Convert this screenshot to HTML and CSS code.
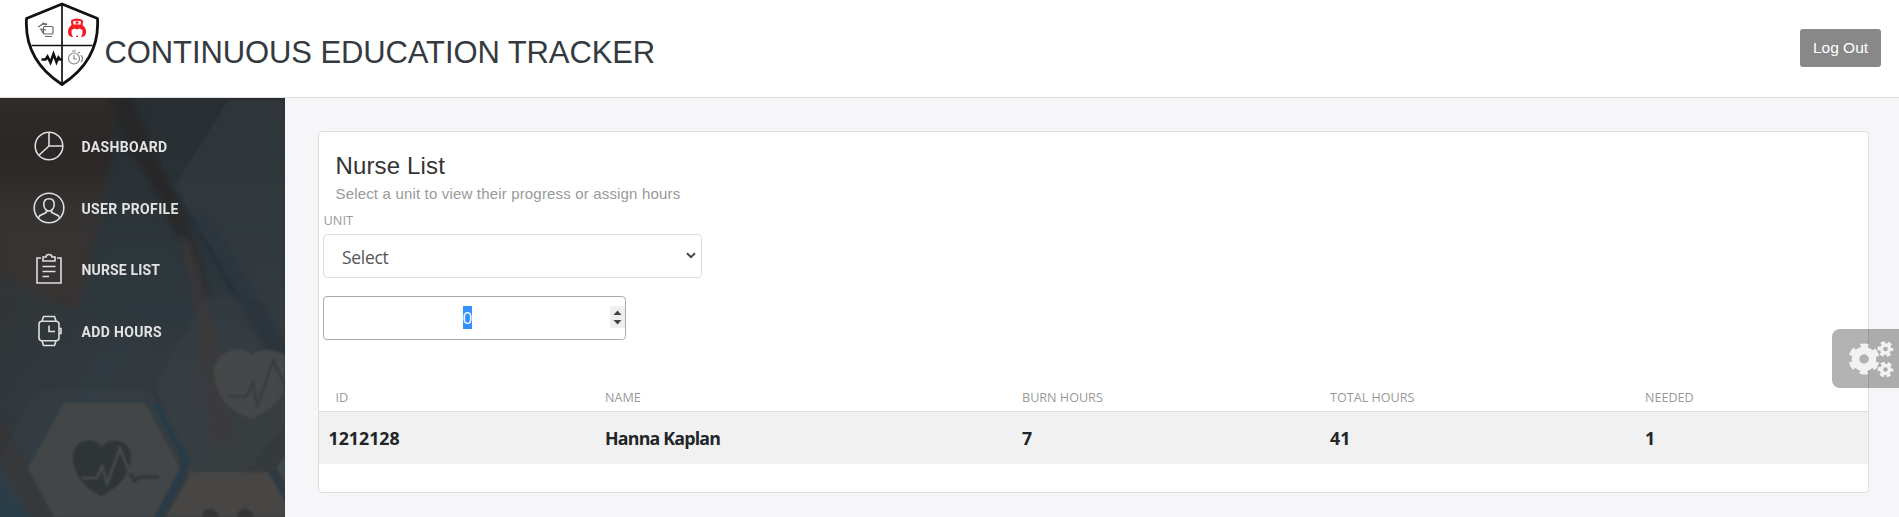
FILE: index.html
```html
<!DOCTYPE html>
<html lang="en">
<head>
<meta charset="utf-8">
<title>Continuous Education Tracker</title>
<link rel="stylesheet" href="styles.css">
</head>
<body>
<header class="header">
  <div class="brand">
    <svg class="shield" viewBox="0 0 76 88" fill="none">
      <path d="M38 4 L73.500 18.500 Q76 60 38 84.500 Q0 60 2.500 18.500 Z" stroke="#111" stroke-width="2.800" stroke-linejoin="round"/>
      <path d="M38 4V84M7.500 45.500H68.500" stroke="#111" stroke-width="1.700"/>
      <g stroke="#666" stroke-width="1.200">
        <rect x="19.500" y="26.500" width="9.500" height="7.500" rx="1"/>
        <path d="M14 27l5-3 4 1M16 29l6 1M21 36.500h7M18 23l5 1M17 29l2 4"/>
      </g>
      <path d="M47 22q-1-3 6-3.500 7 .500 6 3.500l-.500 3q4 3 3.500 8-.500 4-5 4 2-3 1.500-7l-3-1.500-2.500 1-2.500-1-3 1.500q-.500 4 1.500 7-4.500 0-5-4-.500-5 3.500-8z" fill="#f31b24"/>
      <path d="M49 21.500q4-1.500 8 0l-.500 3h-7z" fill="#fff"/>
      <path d="M53 21v3.500M51.300 22.700h3.400M52 36.300h2" stroke="#f31b24" stroke-width="1.200"/>
      <path d="M17.500 59.500h4l2-3 3 6 3-8.500 3 8 2-4.500 1.500 2h2" stroke="#111" stroke-width="2.600"/>
      <g stroke="#888" stroke-width="1.200">
        <circle cx="50" cy="58.500" r="5.500"/><path d="M50 55v4h3M48 51h4M54 53l2-1M57 55q3 4 0 7"/>
      </g>
    </svg>
    <h1 class="brand-name">CONTINUOUS EDUCATION TRACKER</h1>
  </div>
  <button class="logout">Log Out</button>
</header>
<div class="layout">
  <aside class="sidebar">
    <svg class="backdrop" viewBox="0 0 285 419" preserveAspectRatio="none">
      <defs>
        <linearGradient id="base" x1="0" y1="0" x2="1" y2="1">
          <stop offset="0" stop-color="#302f2e"/><stop offset=".5" stop-color="#313a40"/><stop offset="1" stop-color="#363a3c"/>
        </linearGradient>
        <linearGradient id="skin" x1="0" y1="0" x2="0" y2="1">
          <stop offset="0" stop-color="#302d2b"/><stop offset=".3" stop-color="#2a2726"/><stop offset=".55" stop-color="#353130"/><stop offset="1" stop-color="#383331"/>
        </linearGradient>
        <linearGradient id="shade" x1="0" y1="0" x2="0" y2="1">
          <stop offset="0" stop-color="#272c2f"/><stop offset=".7" stop-color="#2c353a"/><stop offset="1" stop-color="#2f383e"/>
        </linearGradient>
        <filter id="soft" color-interpolation-filters="sRGB"><feGaussianBlur stdDeviation="3"/></filter>
        <filter id="wide" color-interpolation-filters="sRGB"><feGaussianBlur stdDeviation="9"/></filter>
        <filter id="edge" color-interpolation-filters="sRGB"><feGaussianBlur stdDeviation=".8"/></filter>
      </defs>
      <rect width="285" height="419" fill="url(#base)"/>
      <path d="M95-30H310V240H180L75 225Z" fill="url(#shade)" filter="url(#wide)"/>
      <g filter="url(#soft)">
        <path d="M-10-10H108Q118 50 105 90Q92 170 76 210Q50 204-10 170Z" fill="url(#skin)"/>
        <path d="M108-5L130-5Q155 60 184 115Q206 170 212 220L200 200Q185 150 165 115Q150 75 125 50Z" fill="#272728"/>
        <path d="M190 120L255 235L290 300V250L205 110Z" fill="#262f37"/>
        <path d="M180 140Q194 190 200 240L208 300L212 345H235L220 265Q208 190 188 140Z" fill="#393637"/>
        <path d="M0 320L40 390L55 425H35L-5 350Z" fill="#353435"/>
        <path d="M0 382L35 425H-5Z" fill="#253b48"/>
      </g>
      <g filter="url(#edge)">
        <path d="M228 2H285V200H240L175 88Z" fill="#3a4245" opacity=".4"/>
        <path d="M0 101H175L202 150V200H0Z" fill="#3d4345" opacity=".1"/>
        <path d="M205 199H285V330L235 385H190L155 286Z" fill="#45494a" opacity=".25"/>
        <path d="M35 292H150L185 350L150 419H0V360Z" fill="#424a4e" opacity=".2"/>
        <path d="M156 306L187 364L158 419" fill="none" stroke="#273c49" stroke-width="6"/>
        <path d="M271 374L287 402" fill="none" stroke="#2b3b45" stroke-width="5"/>
        <path d="M64 305H145L180 370L154 419H54L28 370Z" fill="#424647"/>
        <path d="M191 374H268L285 403V419H166Z" fill="#474645"/>
        <path d="M277 369L285 357V385Z" fill="#41494b"/>
        <path d="M252 258Q247 250 234 252Q213 256 214 278Q217 309 252 321Q283 306 285 288V257Q263 246 252 258Z" fill="#454849"/>
        <path d="M228 298L246 299L253 285L257 309L273 262L285 288" fill="none" stroke="#373b3e" stroke-width="2.500"/>
        <path d="M102 349Q96 341 84 343Q72 347 73 362Q76 386 101 398Q127 386 131 362Q132 346 118 343Q108 341 102 349Z" fill="#2f3436"/>
        <path d="M82 380H97L102 368L107 386L120 350L133 384" fill="none" stroke="#484c4d" stroke-width="2.400"/>
        <path d="M130 375L134.500 383L139 379H159" fill="none" stroke="#2f3436" stroke-width="3"/>
        <path d="M202 419q1-8 8-8t9 8zM237 419q1-8 8-8t9 8z" fill="#343434"/>
      </g>
    </svg>
    <nav class="menu">
      <a class="menu-item"><svg class="menu-icon" viewBox="0 0 32 32"><circle cx="16" cy="16" r="13.800"/><path d="M16 2.200V16H29.800M16 16L6.200 25"/></svg><span>DASHBOARD</span></a>
      <a class="menu-item"><svg class="menu-icon" viewBox="0 0 32 32"><circle cx="16" cy="16" r="14.800"/><path d="M16 6.700C12.500 6.700 10.800 9 10.800 12.200C10.800 16 13 19 16 19C19 19 21.200 16 21.200 12.200C21.200 9 19.500 6.700 16 6.700ZM13.300 18.500V20.500L6.700 23.700L5.500 26M18.700 18.500V20.500L25.300 23.700L26.500 26"/></svg><span>USER PROFILE</span></a>
      <a class="menu-item tight"><svg class="menu-icon" viewBox="0 0 32 32"><path d="M8 5H4V30H28V5H24M10 4V8H22V4H19Q19 1.500 16 1.500Q13 1.500 13 4ZM9.500 13.500H22.500M9.500 18.500H22.500M9.500 23.500H16"/></svg><span>NURSE LIST</span></a>
      <a class="menu-item"><svg class="menu-icon" viewBox="0 0 32 32"><rect x="6" y="6.300" width="20" height="19.400" rx="3"/><path d="M9 6L10.500 1.500H21.500L23 6M9 26L10.500 30.500H21.500L23 26M16 10.500V16.500H22M26 13.500H28V18.500H26"/></svg><span>ADD HOURS</span></a>
    </nav>
  </aside>
  <main class="content">
    <section class="card">
      <h2 class="card-title">Nurse List</h2>
      <p class="card-note">Select a unit to view their progress or assign hours</p>
      <div class="unit-label">UNIT</div>
      <div class="select"><span>Select</span><svg class="chevron" viewBox="0 0 10 7"><path d="M1 1.200L5 5.200L9 1.200"/></svg></div>
      <div class="number">
        <span class="number-value"><span class="selected">0</span></span>
        <span class="spinner"><svg viewBox="0 0 15 22"><path d="M3.500 9L7.500 4.500L11.500 9ZM3.500 14L7.500 18.500L11.500 14Z"/></svg></span>
      </div>
      <div class="table">
        <div class="row head"><span class="first">ID</span><span>NAME</span><span>BURN HOURS</span><span>TOTAL HOURS</span><span>NEEDED</span></div>
        <div class="row data"><span class="first">1212128</span><span class="name">Hanna Kaplan</span><span>7</span><span>41</span><span>1</span></div>
      </div>
    </section>
  </main>
</div>
<div class="settings">
  <svg viewBox="0 0 46 38">
    <g fill="none" stroke="#f2f2f2">
      <circle cx="16" cy="19" r="8.500" stroke-width="7.500"/>
      <circle cx="16" cy="19" r="13.200" stroke-width="4.600" stroke-dasharray="7.600 6.223" stroke-dashoffset="-3.110"/>
      <circle cx="37.500" cy="9" r="4" stroke-width="3.400"/>
      <circle cx="37.500" cy="9" r="6.400" stroke-width="3" stroke-dasharray="3.900 2.802" stroke-dashoffset="1.950"/>
      <circle cx="37.500" cy="29.500" r="4" stroke-width="3.400"/>
      <circle cx="37.500" cy="29.500" r="6.400" stroke-width="3" stroke-dasharray="3.900 2.802" stroke-dashoffset="1.950"/>
    </g>
  </svg>
</div>
</body>
</html>
```

FILE: styles.css
```css
* { box-sizing: border-box; }
html, body { margin: 0; height: 100%; overflow: hidden; }
body { display: flex; flex-direction: column; background: #f6f6f8; font-family: "Open Sans", "Noto Sans", sans-serif; }
.header { flex: none; height: 98px; padding: 0 18px 0 24px; display: flex; justify-content: space-between; background: #fff; border-bottom: 1px solid #ddd; }
.brand { display: flex; }
.shield { width: 76px; height: 88px; }
.brand-name { margin: 36px 0 0 4.500px; font: 400 31px/34px "Liberation Sans", Arial, sans-serif; letter-spacing: -.1px; color: #343a40; white-space: nowrap; }
.logout { width: 81px; height: 38px; margin-top: 29px; padding: 0; border: 0; border-radius: 3px; background: #888; color: #fff; font: 15.500px/38px "Liberation Sans", Arial, sans-serif; }
.layout { flex: 1; min-height: 0; display: flex; }
.sidebar { width: 285px; display: grid; overflow: hidden; background: #30373b; }
.backdrop, .menu { grid-area: 1 / 1; }
.backdrop { width: 285px; height: 419px; }
.menu { z-index: 1; padding: 32px 0 0 33px; display: flex; flex-direction: column; gap: 29.700px; }
.menu-item { height: 32px; display: flex; align-items: center; gap: 16.500px; color: #e3e3e3; font: 700 14px/20px Roboto, sans-serif; letter-spacing: .35px; }
.menu-item.tight { letter-spacing: .15px; }
.menu-item span { padding-top: 2px; }
.menu-icon { width: 32px; height: 32px; fill: none; stroke: #dededf; stroke-width: 1.600; }
.content { flex: 1; padding: 33px 30px 24px 33px; }
.card { height: 362px; padding: 18px 0 0; background: #fff; border: 1px solid #dedede; border-radius: 4px; display: flex; flex-direction: column; }
.card-title { margin: 0 0 0 16.500px; font: 400 24px/31px "Liberation Sans", Arial, sans-serif; letter-spacing: .15px; color: #333; }
.card-note { margin: 3px 0 0 16.500px; font: 15px/20px "Liberation Sans", Arial, sans-serif; letter-spacing: .17px; color: #999; }
.unit-label { margin: 8px 0 5px 4.500px; font-size: 12.800px; line-height: 17px; color: #999; }
.select { width: 379px; height: 44px; margin-left: 4px; padding: 2px 5px 0 18px; border: 1px solid #ddd; border-radius: 4px; display: flex; align-items: center; justify-content: space-between; font-size: 17.500px; letter-spacing: -.3px; color: #555; }
.chevron { width: 10px; height: 7px; margin-top: -3px; fill: none; stroke: #444; stroke-width: 2; }
.number { width: 303px; height: 44px; margin: 18px 0 0 4px; border: 1px solid #aaa; border-radius: 4px; display: flex; align-items: center; }
.number-value { flex: 1; margin-top: -2px; text-align: center; font-size: 17px; line-height: 23px; color: #fff; }
.selected { display: inline-block; width: 9px; height: 23px; background: #3390ff; }
.spinner { width: 15px; height: 22px; margin-top: -2px; background: #efefef; }
.spinner svg { display: block; width: 15px; height: 22px; fill: #444; }
.table { margin-top: 42px; }
.row { display: grid; grid-template-columns: 286px 417px 308px 315px 1fr; align-items: center; white-space: nowrap; }
.head { height: 30px; padding-top: 2px; border-bottom: 1px solid #ddd; font-size: 12.600px; color: #999; }
.head .first { padding-left: 16.500px; }
.data { height: 52px; background: #f1f1f1; font-size: 17.800px; font-weight: 700; color: #212529; }
.data .first { padding-left: 9.500px; }
.data .name { letter-spacing: -.8px; }
.settings { position: fixed; right: 0; top: 329px; width: 67px; height: 59px; padding: 11px 0 0 16px; border-radius: 8px 0 0 8px; background: rgba(0, 0, 0, .3); }
.settings svg { display: block; width: 46px; height: 38px; }
```
